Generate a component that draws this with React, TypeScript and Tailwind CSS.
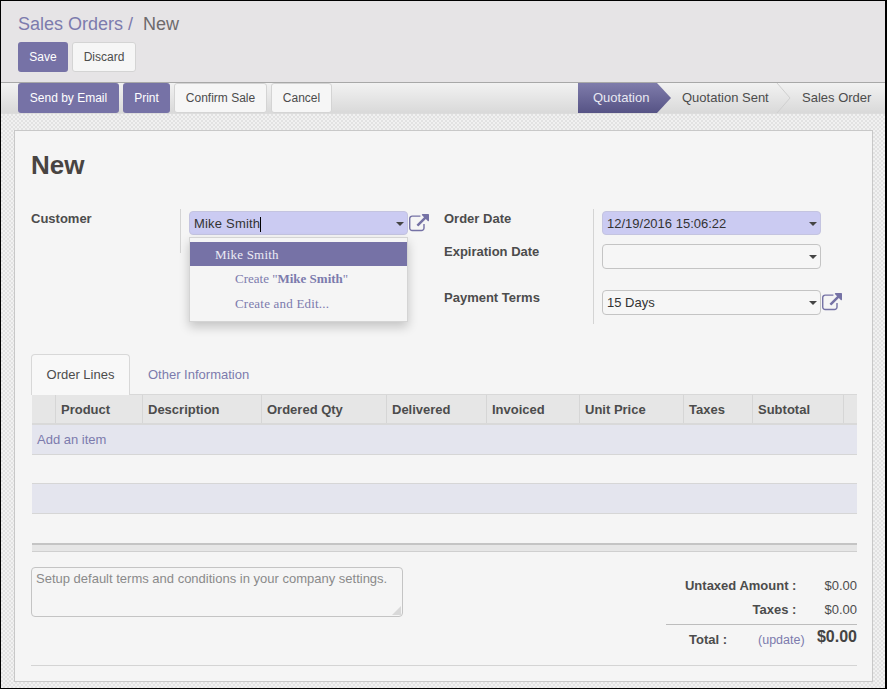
import React from "react";

const FA =
  "M1408 928v320q0 119-84.5 203.5t-203.5 84.5h-832q-119 0-203.5-84.5t-84.5-203.5v-832q0-119 84.5-203.5t203.5-84.5h704q14 0 23 9t9 23v64q0 14-9 23t-23 9h-704q-66 0-113 47t-47 113v832q0 66 47 113t113 47h832q66 0 113-47t47-113v-320q0-14 9-23t23-9h64q14 0 23 9t9 23zm384-864v512q0 26-19 45t-45 19-45-19l-176-176-652 652q-10 10-23 10t-23-10l-114-114q-10-10-10-23t10-23l652-652-176-176q-19-19-19-45t19-45 45-19h512q26 0 45 19t19 45z";

function ExtLink() {
  return (
    <svg viewBox="0 0 1792 1792" className="w-[20px] h-[20px] mt-[3px] shrink-0 text-[#7572a5]" fill="currentColor">
      <path d={FA} />
    </svg>
  );
}

function Caret() {
  return <span className="ml-auto mr-[1px] w-0 h-0 border-x-[4px] border-x-transparent border-t-[4px] border-t-[#444]" />;
}

function PrimaryBtn({ w, children }: { w: string; children: React.ReactNode }) {
  return <button className={w + " h-[30px] rounded-[3px] bg-[#7672a6] text-white text-[12px]"}>{children}</button>;
}

function DefaultBtn({ w, children }: { w: string; children: React.ReactNode }) {
  return (
    <button className={w + " h-[30px] rounded-[3px] bg-[#f6f6f6] border border-[#d4d4d4] text-[#4c4c4c] text-[12px]"}>
      {children}
    </button>
  );
}

function Field({ value, tall, highlight }: { value?: string; tall?: boolean; highlight?: boolean }) {
  return (
    <div
      className={
        "w-[219px] flex items-center pl-[4px] pr-[2px] rounded-[4px] border text-[13px] text-[#333] " +
        (tall ? "h-[25px] " : "h-[24px] pt-[2px] ") +
        (highlight ? "bg-[#cbcbf2] border-[#c4c4e0]" : "bg-[#f6f6f6] border-[#c4c4c4]")
      }
    >
      {value}
      <Caret />
    </div>
  );
}

const cols = [
  { w: "w-[23px]", t: "" },
  { w: "w-[87px]", t: "Product" },
  { w: "w-[119px]", t: "Description" },
  { w: "w-[125px]", t: "Ordered Qty" },
  { w: "w-[100px]", t: "Delivered" },
  { w: "w-[93px]", t: "Invoiced" },
  { w: "w-[104px]", t: "Unit Price" },
  { w: "w-[69px]", t: "Taxes" },
  { w: "w-[91px]", t: "Subtotal" },
  { w: "w-[14px]", t: "" },
];

export default function App() {
  return (
    <div className="w-[887px] h-[689px] bg-black pt-px pl-px pr-[2px] pb-px flex flex-col font-['Liberation_Sans',Arial,sans-serif] text-[13px] text-[#4c4c4c] overflow-hidden">
      {/* control panel */}
      <header className="h-[82px] shrink-0 bg-[#e6e4e6] border-b border-[#a8a8a8] pl-[17px] pt-[12px]">
        <div className="h-[22px] flex items-center text-[18px] leading-[22px]">
          <span className="text-[#7c7bad]">Sales Orders</span>
          <span className="text-[#7c7bad] ml-[5px]">/</span>
          <span className="text-[#6e6a6c] ml-[10px]">New</span>
        </div>
        <div className="mt-[7px] flex gap-[4px]">
          <PrimaryBtn w="w-[50px]">Save</PrimaryBtn>
          <DefaultBtn w="w-[64px]">Discard</DefaultBtn>
        </div>
      </header>

      {/* status bar */}
      <div className="h-[30px] shrink-0 pl-[17px] flex gap-[4px] bg-gradient-to-b from-[#f2f2f2] to-[#d9d9d9]">
        <PrimaryBtn w="w-[101px]">Send by Email</PrimaryBtn>
        <PrimaryBtn w="w-[47px]">Print</PrimaryBtn>
        <DefaultBtn w="w-[93px]">Confirm Sale</DefaultBtn>
        <DefaultBtn w="w-[61px]">Cancel</DefaultBtn>
        <div className="ml-auto flex h-full text-[13px] text-[#4c4c4c]">
          <div className="relative w-[92px] h-full flex items-center">
            <svg className="absolute inset-0" width="93" height="30" viewBox="0 0 93 30">
              <defs>
                <linearGradient id="q" x1="0" y1="0" x2="0" y2="1">
                  <stop offset="0" stopColor="#7f7cab" />
                  <stop offset="1" stopColor="#565385" />
                </linearGradient>
              </defs>
              <polygon points="0,0 79,0 93,15 79,30 0,30" fill="url(#q)" />
            </svg>
            <span className="relative pl-[15px] text-[#e8e8f2]">Quotation</span>
          </div>
          <div className="relative w-[120px] h-full flex items-center">
            <span className="pl-[12px]">Quotation Sent</span>
            <svg className="absolute right-[-1px] top-0" width="15" height="30" viewBox="0 0 15 30">
              <polyline points="1,0 14,15 1,30" fill="none" stroke="#cfcfcf" strokeWidth="1" />
            </svg>
          </div>
          <div className="w-[95px] h-full flex items-center pl-[12px]">Sales Order</div>
        </div>
      </div>

      {/* sheet background */}
      <main className="flex-1 min-h-0 pt-[16px] pl-[13px] pr-[12px] pb-[6px] border-t border-[#dcdcdc] bg-[repeating-conic-gradient(#e2e2e2_0_25%,#f1f1f1_0_50%)] bg-[length:4px_4px]">
        <section className="h-full bg-[#f5f5f5] border border-[#c8c8c8] pl-[16px] pr-[15px] flex flex-col">
          <h1 className="mt-[18px] h-[32px] leading-[32px] text-[26px] font-bold text-[#484442]">New</h1>

          {/* form */}
          <div className="mt-[28px] h-[115px] flex">
            <div className="w-[413px] flex items-start">
              <div className="w-[149px] pt-[2px] font-bold leading-[15px]">Customer</div>
              <div className="relative h-[44px] border-l border-[#d4d4d4] pl-[8px] pt-[2px] flex items-start gap-[1px]">
                <div className="relative">
                  <div className="w-[219px] h-[24px] pt-[2px] flex items-center pl-[4px] pr-[2px] rounded-[4px] border border-[#c4c4e0] bg-[#cbcbf2] text-[13px] text-[#333]">
                    <span className="tracking-[0.2px]">Mike Smith</span>
                    <span className="w-px h-[15px] bg-black" />
                    <Caret />
                  </div>
                  <div className="absolute z-10 left-0 top-[26px] w-[219px] h-[85px] pt-[4px] bg-[#f5f5f5] border border-[#d4d4d4] shadow-[0_5px_10px_rgba(0,0,0,0.2)] font-['Liberation_Serif',serif] text-[13px] text-[#7c7bad]">
                    <div className="h-[24px] pt-px leading-[24px] pl-[25px] tracking-[0.2px] bg-[#7672a6] text-[#ecebf4]">Mike Smith</div>
                    <div className="h-[25px] leading-[25px] pl-[45px]">
                      Create "<b>Mike Smith</b>"
                    </div>
                    <div className="h-[25px] leading-[25px] pl-[45px] tracking-[0.2px]">Create and Edit...</div>
                  </div>
                </div>
                <ExtLink />
              </div>
            </div>
            <div className="flex-1 flex items-start">
              <div className="w-[149px] font-bold">
                <div className="h-[33px] pt-[2px] leading-[15px]">Order Date</div>
                <div className="h-[46px] pt-[2px] leading-[15px]">Expiration Date</div>
                <div className="pt-[2px] leading-[15px]">Payment Terms</div>
              </div>
              <div className="h-[115px] border-l border-[#d4d4d4] pl-[8px] pt-[2px] flex flex-col">
                <Field value="12/19/2016 15:06:22" highlight />
                <div className="mt-[9px]">
                  <Field tall />
                </div>
                <div className="mt-[21px] flex items-start gap-[1px]">
                  <Field value="15 Days" tall />
                  <ExtLink />
                </div>
              </div>
            </div>
          </div>

          {/* tabs */}
          <div className="mt-[30px] h-[41px] flex border-b border-[#d8d8d8]">
            <div className="w-[99px] h-[41px] flex items-center justify-center bg-[#f8f8f8] border border-b-0 border-[#d8d8d8] rounded-t-[4px] text-[#4c4c4c]">
              Order Lines
            </div>
            <div className="ml-[18px] h-[40px] pt-[2px] flex items-center text-[#7c7bad]">Other Information</div>
          </div>

          {/* table */}
          <div className="ml-px flex flex-col">
            <div className="flex h-[30px] bg-[#e6e6e6] border-b-2 border-[#d9d9d9]">
              {cols.map((c, i) => (
                <div
                  key={i}
                  className={
                    c.w +
                    " shrink-0 flex items-center pl-[5px] pt-[2px] font-bold text-[#4c4c4c] " +
                    (i > 0 ? "border-l border-[#d6d6d6]" : "")
                  }
                >
                  {c.t}
                </div>
              ))}
            </div>
            <div className="h-[30px] flex items-center pl-[5px] bg-[#e4e5ee] border-b border-[#d6d6d6] text-[#7c7bad]">
              Add an item
            </div>
            <div className="h-[28px]" />
            <div className="h-[31px] bg-[#e4e5ee] border-y border-[#d6d6d6]" />
            <div className="h-[29px]" />
            <div className="h-[9px] bg-[#e6e6e6] border-t-2 border-b border-t-[#c4c4c4] border-b-[#cfcfcf]" />
          </div>

          {/* footer */}
          <div className="mt-[15px] flex justify-between items-start">
            <div className="relative w-[372px] h-[50px] rounded-[4px] border border-[#c4c4c4] px-[4px] pt-[3px] leading-[16px] text-[#8a8a8a]">
              Setup default terms and conditions in your company settings.
              <svg className="absolute right-[1px] bottom-[1px]" width="9" height="9" viewBox="0 0 9 9">
                <polygon points="9,0 9,9 0,9" fill="#d9d9d9" />
              </svg>
            </div>
            <div className="w-[191px] mt-[7px]">
              <div className="h-[24px] flex items-center justify-end">
                <b className="mr-[28px]">Untaxed Amount :</b>
                <span>$0.00</span>
              </div>
              <div className="h-[24px] flex items-center justify-end">
                <b className="mr-[28px]">Taxes :</b>
                <span>$0.00</span>
              </div>
              <div className="h-[28px] mt-[2px] border-t border-[#bdbdbd] flex items-center">
                <b className="ml-[23px] mt-[2px]">Total :</b>
                <span className="ml-[31px] mt-[3px] text-[12.5px] text-[#7c7bad]">(update)</span>
                <b className="ml-auto text-[16px] leading-[16px] text-[#444] -mt-[3px]">$0.00</b>
              </div>
            </div>
          </div>
          <div className="mt-[13px] h-px bg-[#d4d4d4]" />
        </section>
      </main>
    </div>
  );
}
